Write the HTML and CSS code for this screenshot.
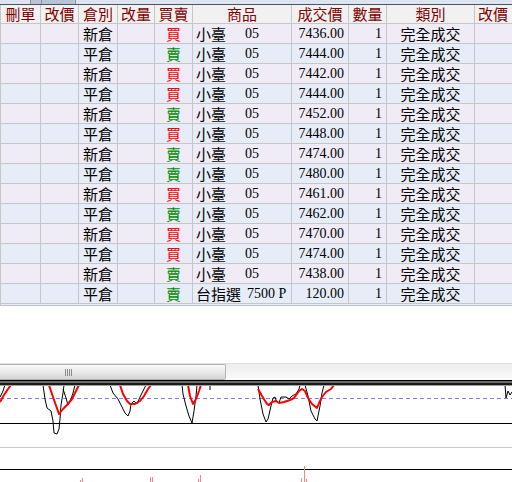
FILE: index.html
```html
<!DOCTYPE html>
<html>
<head>
<meta charset="utf-8">
<link rel="stylesheet" href="styles.css">
</head>
<body>
<div class="page">
  <div class="topstrip">
    <div class="seg s1"></div><div class="seg s2"></div><div class="seg s3"></div><div class="seg s4"></div>
  </div>
  <div class="grid">
    <div class="row head">
      <div class="c">刪單</div><div class="c">改價</div><div class="c">倉別</div><div class="c">改量</div><div class="c">買賣</div><div class="c">商品</div><div class="c">成交價</div><div class="c">數量</div><div class="c">類別</div><div class="c">改價</div>
    </div>
    <div class="row odd"><div class="c"></div><div class="c"></div><div class="c">新倉</div><div class="c"></div><div class="c buy">買</div><div class="c prod"><span class="nm">小臺</span><span>05</span></div><div class="c num">7436.00</div><div class="c num">1</div><div class="c">完全成交</div><div class="c"></div></div>
    <div class="row even"><div class="c"></div><div class="c"></div><div class="c">平倉</div><div class="c"></div><div class="c sell">賣</div><div class="c prod"><span class="nm">小臺</span><span>05</span></div><div class="c num">7444.00</div><div class="c num">1</div><div class="c">完全成交</div><div class="c"></div></div>
    <div class="row odd"><div class="c"></div><div class="c"></div><div class="c">新倉</div><div class="c"></div><div class="c buy">買</div><div class="c prod"><span class="nm">小臺</span><span>05</span></div><div class="c num">7442.00</div><div class="c num">1</div><div class="c">完全成交</div><div class="c"></div></div>
    <div class="row even"><div class="c"></div><div class="c"></div><div class="c">平倉</div><div class="c"></div><div class="c buy">買</div><div class="c prod"><span class="nm">小臺</span><span>05</span></div><div class="c num">7444.00</div><div class="c num">1</div><div class="c">完全成交</div><div class="c"></div></div>
    <div class="row odd"><div class="c"></div><div class="c"></div><div class="c">新倉</div><div class="c"></div><div class="c sell">賣</div><div class="c prod"><span class="nm">小臺</span><span>05</span></div><div class="c num">7452.00</div><div class="c num">1</div><div class="c">完全成交</div><div class="c"></div></div>
    <div class="row even"><div class="c"></div><div class="c"></div><div class="c">平倉</div><div class="c"></div><div class="c buy">買</div><div class="c prod"><span class="nm">小臺</span><span>05</span></div><div class="c num">7448.00</div><div class="c num">1</div><div class="c">完全成交</div><div class="c"></div></div>
    <div class="row odd"><div class="c"></div><div class="c"></div><div class="c">新倉</div><div class="c"></div><div class="c sell">賣</div><div class="c prod"><span class="nm">小臺</span><span>05</span></div><div class="c num">7474.00</div><div class="c num">1</div><div class="c">完全成交</div><div class="c"></div></div>
    <div class="row even"><div class="c"></div><div class="c"></div><div class="c">平倉</div><div class="c"></div><div class="c sell">賣</div><div class="c prod"><span class="nm">小臺</span><span>05</span></div><div class="c num">7480.00</div><div class="c num">1</div><div class="c">完全成交</div><div class="c"></div></div>
    <div class="row odd"><div class="c"></div><div class="c"></div><div class="c">新倉</div><div class="c"></div><div class="c buy">買</div><div class="c prod"><span class="nm">小臺</span><span>05</span></div><div class="c num">7461.00</div><div class="c num">1</div><div class="c">完全成交</div><div class="c"></div></div>
    <div class="row even"><div class="c"></div><div class="c"></div><div class="c">平倉</div><div class="c"></div><div class="c sell">賣</div><div class="c prod"><span class="nm">小臺</span><span>05</span></div><div class="c num">7462.00</div><div class="c num">1</div><div class="c">完全成交</div><div class="c"></div></div>
    <div class="row odd"><div class="c"></div><div class="c"></div><div class="c">新倉</div><div class="c"></div><div class="c buy">買</div><div class="c prod"><span class="nm">小臺</span><span>05</span></div><div class="c num">7470.00</div><div class="c num">1</div><div class="c">完全成交</div><div class="c"></div></div>
    <div class="row even"><div class="c"></div><div class="c"></div><div class="c">平倉</div><div class="c"></div><div class="c buy">買</div><div class="c prod"><span class="nm">小臺</span><span>05</span></div><div class="c num">7474.00</div><div class="c num">1</div><div class="c">完全成交</div><div class="c"></div></div>
    <div class="row odd"><div class="c"></div><div class="c"></div><div class="c">新倉</div><div class="c"></div><div class="c sell">賣</div><div class="c prod"><span class="nm">小臺</span><span>05</span></div><div class="c num">7438.00</div><div class="c num">1</div><div class="c">完全成交</div><div class="c"></div></div>
    <div class="row even last"><div class="c"></div><div class="c"></div><div class="c">平倉</div><div class="c"></div><div class="c sell">賣</div><div class="c prod"><span class="nm">台指選</span><span class="opt">7500 P</span></div><div class="c num">120.00</div><div class="c num">1</div><div class="c">完全成交</div><div class="c"></div></div>
  </div>
  <div class="spacer"></div>
  <div class="scrollbar">
    <div class="thumb"><div class="grip"><i></i><i></i><i></i><i></i></div></div>
  </div>
  <svg class="chart" width="512" height="103" viewBox="0 379 512 103">
    <defs><clipPath id="cp"><rect x="0" y="385" width="512" height="100"/></clipPath></defs>
    <rect x="0" y="379" width="512" height="1" fill="#000"/>
    <rect x="0" y="380" width="512" height="2" fill="#6c6c6c"/>
    <rect x="0" y="382" width="512" height="2" fill="#1a1a1a"/>
    <rect x="0" y="384" width="512" height="1" fill="#a0a0a0"/>
    <line x1="0" y1="397.5" x2="512" y2="397.5" stroke="#8080ff" stroke-width="1" stroke-dasharray="4 3"/>
    <line x1="0" y1="422.5" x2="512" y2="422.5" stroke="#000" stroke-width="1"/>
    <line x1="0" y1="446.5" x2="512" y2="446.5" stroke="#c8c8c8" stroke-width="1"/>
    <line x1="0" y1="468.5" x2="512" y2="468.5" stroke="#000" stroke-width="1"/>
    <g clip-path="url(#cp)" fill="none">
      <g stroke="#000" stroke-width="1">
        <polyline points="0,396 3,390 5,384"/>
        <polyline points="43,384 45,398 47,407 51,410 53,420 54,432 57,433 59,428 60,418 61,404 63,392 64,384"/>
        <polyline points="63,388 66,397 68,404 71,398 73,392 75,384"/>
        <polyline points="110,384 113,392 118,398 122,406 125,412 128,415 130,410 131,403 134,400 137,403 140,396 144,388 146,384"/>
        <polyline points="182,384 183,393 186,405 189,415 192,422 194,410 196,395 197,384"/>
        <polyline points="210,384 210,389"/>
        <polyline points="258,384 260,398 263,413 266,421 268,418 271,405 273,397 275,396 276,399 279,402 281,396 286,396 289,398 292,395 296,393 299,388 300,384"/>
        <polyline points="305,384 308,395 311,410 315,418 317,420 320,405 322,392 324,384"/>
        <polyline points="505,384 506,397 508,390 510,394 512,391"/>
      </g>
      <g stroke="#ff0000" stroke-width="2" stroke-linejoin="round">
        <polyline points="0,401 4,394 8,388 11,384"/>
        <polyline points="49,384 53,396 59,413 63,408 67,404 72,398 75,392 79,384"/>
        <polyline points="120,384 123,393 127,400 130,403 135,403 140,400 144,395 148,388 151,384"/>
        <polyline points="188,384 190,395 193,403 196,398 199,390 201,384"/>
        <polyline points="258,388 262,395 267,403 269,404 272,401 276,400 279,402 284,401 290,399 294,397 299,390 302,388 305,390 308,397 312,403 317,407 319,402 322,396 326,391 331,388 334,384"/>
      </g>
    </g>
    <g fill="#ff8080">
      <rect x="80" y="479" width="1" height="3"/>
      <rect x="82" y="477" width="1" height="5"/>
      <rect x="150" y="476" width="1" height="6"/>
      <rect x="152" y="476" width="1" height="6"/>
      <rect x="198" y="478" width="1" height="4"/>
      <rect x="200" y="474" width="1" height="8"/>
      <rect x="301" y="477" width="1" height="5"/>
      <rect x="304" y="465" width="1" height="17"/>
      <rect x="306" y="478" width="1" height="4"/>
    </g>
  </svg>
</div>
</body>
</html>
```
FILE: styles.css
```css
html, body {
  margin: 0;
  padding: 0;
  background: #fff;
}
.page {
  width: 512px;
  height: 482px;
  overflow: hidden;
  display: flex;
  flex-direction: column;
}
.topstrip {
  height: 4px;
  display: flex;
  background: #dde4f0;
  border-bottom: 1px solid #4a5568;
  flex: none;
}
.seg { height: 4px; }
.s1 { width: 30px; background: #dde4f0; border-right: 1px solid #8a93a3; }
.s2 { width: 10px; background: #b9c3d3; border-right: 1px solid #8a93a3; }
.s3 { width: 33px; background: #b9c3d3; border-right: 1px solid #8a93a3; }
.s4 { flex: 1; background: #dde4f0; }
.grid {
  width: 512px;
  flex: none;
  font-family: "Noto Sans CJK TC", "Noto Sans CJK SC", sans-serif;
  font-size: 15px;
  color: #000;
}
.row {
  display: grid;
  grid-template-columns: 40px 38px 39px 37px 38px 99px 57px 38px 88px 37px;
  border-left: 1px solid #c6c6c6;
  height: 20px;
}
.row.head {
  height: 19px;
  background: #f1f1f1;
  color: #800000;
}
.row.odd { background: #efebf7; }
.row.even { background: #e7edf8; }
.row.last { border-bottom: 1px solid #c0c0c0; height: 21px; }
.c {
  box-sizing: border-box;
  border-right: 1px solid #c6c6c6;
  border-bottom: 1px solid #c6c6c6;
  text-align: center;
  line-height: 19px;
  height: 20px;
  white-space: nowrap;
}
.head .c { line-height: 18px; height: 19px; }
.row .c:last-child { border-right: none; text-align: left; padding-left: 3px; }
.c.buy { color: #ff0000; }
.c.sell { color: #008a00; }
.c.prod {
  text-align: left;
  padding-left: 3px;
  display: flex;
}
.prod .nm { width: 49px; flex: none; }
.prod span:last-child {
  font-family: "Liberation Serif", serif;
  font-size: 14px;
}
.prod .opt { padding-left: 2px; }
.c.num {
  text-align: right;
  padding-right: 4px;
  font-family: "Liberation Serif", serif;
  font-size: 14px;
}
.spacer {
  height: 57px;
  flex: none;
}
.scrollbar {
  height: 17px;
  flex: none;
  box-sizing: border-box;
  border-top: 1px solid #e2e2e2;
  background: linear-gradient(#ececec, #fbfbfb);
  display: flex;
}
.thumb {
  width: 226px;
  box-sizing: border-box;
  border: 1px solid #b4b4b4;
  border-left: none;
  border-radius: 0 2px 2px 0;
  background: linear-gradient(#fafafa, #e6e6e6 60%, #d4d4d4);
  display: flex;
  align-items: center;
}
.grip {
  display: flex;
  gap: 1px;
  margin-left: 65px;
}
.grip i {
  display: block;
  width: 1px;
  height: 7px;
  background: #8a8a8a;
}
.chart {
  display: block;
  flex: none;
}
```
